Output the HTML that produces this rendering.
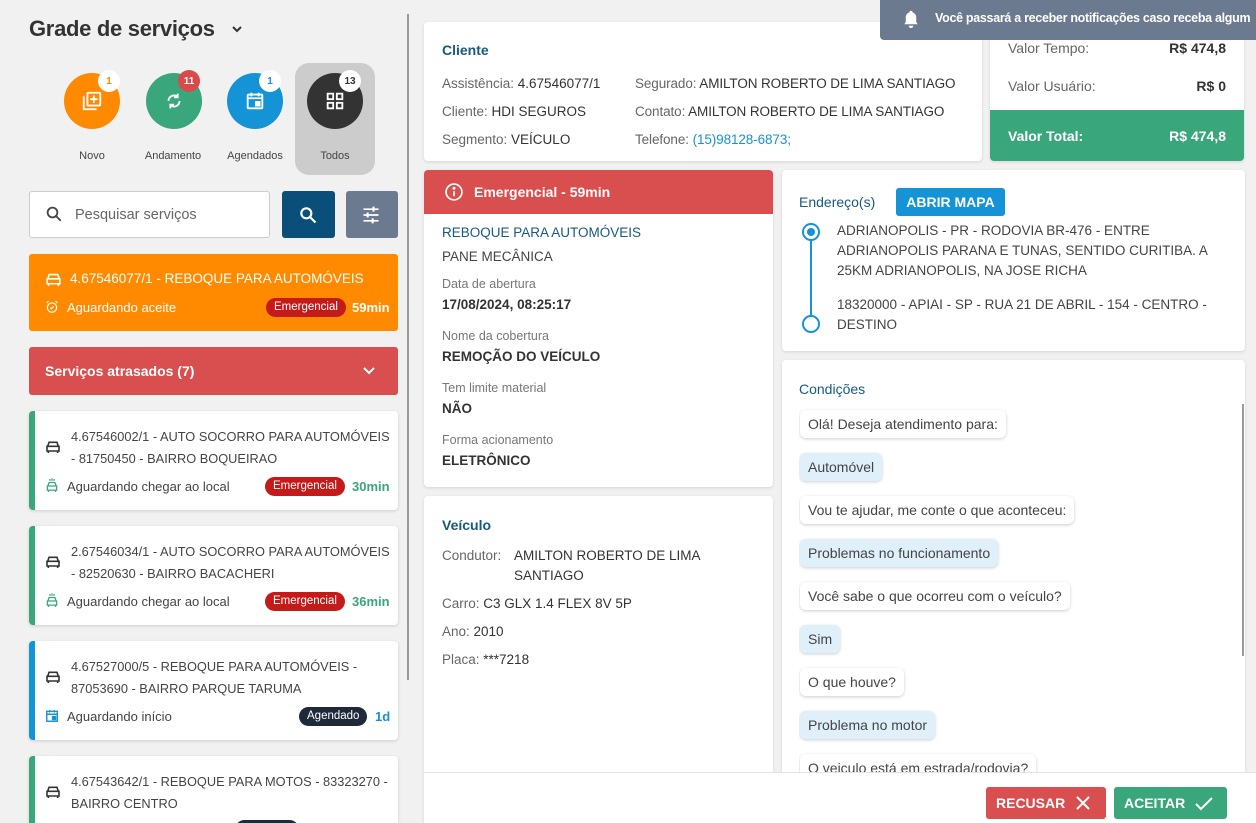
<!DOCTYPE html>
<html style="overflow:hidden"><head><meta charset="utf-8"><style>
*{box-sizing:border-box;margin:0;padding:0}
html,body{width:1256px;height:823px;overflow:hidden}
body{background:#f1f1f1;font-family:"Liberation Sans",sans-serif;color:#333;position:relative;font-size:13px}
.abs{position:absolute}
.card{position:absolute;background:#fff;border-radius:4px;box-shadow:0 1px 3px rgba(0,0,0,.12)}
.title{color:#175a80;font-size:14px;font-weight:bold}
.lbl{color:#666}
.circ{position:absolute;width:56px;height:56px;border-radius:50%;display:flex;align-items:center;justify-content:center}
.badge{position:absolute;width:22px;height:22px;border-radius:50%;background:#fff;font-size:10px;font-weight:bold;display:flex;align-items:center;justify-content:center}
.clab{position:absolute;font-size:11px;color:#444;text-align:center;width:80px}
.svc{position:absolute;left:29px;width:369px;background:#fff;border-radius:4px;box-shadow:0 1px 3px rgba(0,0,0,.15);border-left:6px solid #3aa67b;overflow:hidden}
.svc .t{position:absolute;left:36px;top:15px;font-size:12.8px;line-height:22px;color:#444;width:326px}
.svc .s{position:absolute;left:32px;top:68px;font-size:13px;color:#444}
.pill{position:absolute;border-radius:10px;color:#fff;font-size:11.5px;padding:0 8px;height:19px;line-height:19px}
.tm{position:absolute;font-size:13px;font-weight:bold}
.bub{display:block;width:fit-content;height:28px;line-height:28px;border-radius:6px;padding:0 8px;font-size:14px;color:#444;background:#fff;box-shadow:0 1px 3px rgba(0,0,0,.2);margin-bottom:15px}
.bub.a{background:#dff0fb}
</style></head><body>

<!-- LEFT -->
<div class="abs" style="left:29px;top:16px;font-size:22px;color:#333;font-weight:bold;letter-spacing:-.3px">Grade de serviços</div>
<svg class="abs" style="left:230px;top:24px" width="14" height="12" viewBox="0 0 14 12"><path d="M3 3l4 4 4-4" stroke="#333" stroke-width="2" fill="none"/></svg>
<div class="abs" style="left:407px;top:14px;width:2px;height:666px;background:#999"></div>

<div class="abs" style="left:295px;top:63px;width:80px;height:112px;background:#ccc;border-radius:14px"></div>
<div class="circ" style="left:64px;top:73px;background:#ff8a00"><svg width="22" height="22" viewBox="0 0 24 24" fill="none" stroke="#fff" stroke-width="2"><rect x="7" y="3" width="14" height="14" rx="1"/><path d="M3 7v14h14M14 6v8M10 10h8"/></svg></div>
<div class="badge" style="left:98px;top:70px;color:#ff8a00">1</div>
<div class="circ" style="left:146px;top:73px;background:#3aa67b"><svg width="22" height="22" viewBox="0 0 24 24" fill="none" stroke="#fff" stroke-width="2"><path d="M6 12a6 6 0 0 1 10-4.5M18 12a6 6 0 0 1-10 4.5"/><path d="M16 4v4h-4M8 20v-4h4"/></svg></div>
<div class="badge" style="left:178px;top:70px;background:#d94a4a;color:#fff">11</div>
<div class="circ" style="left:227px;top:73px;background:#1493d6"><svg width="22" height="22" viewBox="0 0 24 24" fill="none" stroke="#fff" stroke-width="2"><rect x="4" y="5" width="16" height="15" rx="1"/><path d="M4 9h16M8 3v4M16 3v4"/><rect x="13" y="13" width="4" height="4" fill="#fff"/></svg></div>
<div class="badge" style="left:259px;top:70px;color:#1493d6">1</div>
<div class="circ" style="left:307px;top:73px;background:#333"><svg width="22" height="22" viewBox="0 0 24 24" fill="none" stroke="#fff" stroke-width="2"><rect x="4" y="4" width="6" height="6"/><rect x="14" y="4" width="6" height="6"/><rect x="4" y="14" width="6" height="6"/><rect x="14" y="14" width="6" height="6"/></svg></div>
<div class="badge" style="left:339px;top:70px;color:#333">13</div>
<div class="clab" style="left:52px;top:150px">Novo</div>
<div class="clab" style="left:133px;top:150px">Andamento</div>
<div class="clab" style="left:215px;top:150px">Agendados</div>
<div class="clab" style="left:295px;top:150px">Todos</div>

<div class="abs" style="left:29px;top:191px;width:241px;height:47px;background:#fff;border:1px solid #ccc;border-radius:3px"></div>
<svg class="abs" style="left:45px;top:205px" width="18" height="18" viewBox="0 0 24 24" fill="none" stroke="#444" stroke-width="2.4"><circle cx="10" cy="10" r="6.5"/><path d="M15 15l6 6"/></svg>
<div class="abs" style="left:75px;top:207px;font-size:14.5px;color:#666">Pesquisar serviços</div>
<div class="abs" style="left:282px;top:191px;width:53px;height:47px;background:#0a4f7a;border-radius:3px"></div>
<svg class="abs" style="left:298px;top:205px" width="20" height="20" viewBox="0 0 24 24" fill="none" stroke="#fff" stroke-width="2.6"><circle cx="10" cy="10" r="6"/><path d="M15 15l6 6"/></svg>
<div class="abs" style="left:346px;top:191px;width:52px;height:47px;background:#6b7a8f;border-radius:3px"></div>
<svg class="abs" style="left:361px;top:205px" width="20" height="20" viewBox="0 0 24 24" fill="none" stroke="#fff" stroke-width="2"><path d="M3 5h18M3 12h18M3 19h18"/><path d="M15 2v6M8 9v6M14 16v6" stroke-width="2.5"/></svg>

<div class="abs" style="left:29px;top:254px;width:369px;height:77px;background:#ff8a00;border-radius:3px;color:#fff"></div>
<svg class="abs" style="left:45px;top:272px" width="17" height="15" viewBox="0 0 24 20" fill="none" stroke="#fff" stroke-width="2.2"><path d="M4 9l2-6h12l2 6M3 9h18v7H3zM5 16v3M19 16v3"/></svg>
<div class="abs" style="left:70px;top:271px;font-size:13.5px;color:#fff">4.67546077/1 - REBOQUE PARA AUTOMÓVEIS</div>
<svg class="abs" style="left:45px;top:300px" width="14" height="14" viewBox="0 0 24 24" fill="none" stroke="#fff" stroke-width="2"><circle cx="12" cy="13" r="8"/><path d="M9 13l2 2 4-4M3 5l3-3M21 5l-3-3"/></svg>
<div class="abs" style="left:67px;top:300px;font-size:13px;color:#fff">Aguardando aceite</div>
<div class="pill" style="left:266px;top:298px;background:#c41a1a">Emergencial</div>
<div class="tm" style="left:352px;top:300px;color:#fff">59min</div>

<div class="abs" style="left:29px;top:347px;width:369px;height:48px;background:#d94f4f;border-radius:3px"></div>
<div class="abs" style="left:45px;top:363px;font-size:14px;color:#fff;font-weight:bold">Serviços atrasados (7)</div>
<svg class="abs" style="left:362px;top:365px" width="14" height="12" viewBox="0 0 14 12"><path d="M2 3l5 5 5-5" stroke="#fff" stroke-width="2" fill="none"/></svg>

<div class="svc" style="top:411px;height:99px"><div class="t">4.67546002/1 - AUTO SOCORRO PARA AUTOMÓVEIS - 81750450 - BAIRRO BOQUEIRAO</div><div class="s">Aguardando chegar ao local</div>
<div class="pill" style="left:230px;top:66px;background:#c41a1a">Emergencial</div><div class="tm" style="left:317px;top:68px;color:#3aa67b">30min</div></div>
<div class="svc" style="top:526px;height:99px"><div class="t">2.67546034/1 - AUTO SOCORRO PARA AUTOMÓVEIS - 82520630 - BAIRRO BACACHERI</div><div class="s">Aguardando chegar ao local</div>
<div class="pill" style="left:230px;top:66px;background:#c41a1a">Emergencial</div><div class="tm" style="left:317px;top:68px;color:#3aa67b">36min</div></div>
<div class="svc" style="top:641px;height:99px;border-left-color:#1493d6"><div class="t">4.67527000/5 - REBOQUE PARA AUTOMÓVEIS - 87053690 - BAIRRO PARQUE TARUMA</div><div class="s">Aguardando início</div>
<div class="pill" style="left:264px;top:66px;background:#1e2a3a">Agendado</div><div class="tm" style="left:340px;top:68px;color:#1493d6">1d</div></div>
<div class="svc" style="top:756px;height:67px;border-radius:4px 4px 0 0"><div class="t">4.67543642/1 - REBOQUE PARA MOTOS - 83323270 - BAIRRO CENTRO</div>
<div class="pill" style="left:200px;top:64px;background:#1e2a3a;width:64px"></div></div>
<svg class="abs" style="left:45px;top:440px" width="16" height="14" viewBox="0 0 24 20" fill="none" stroke="#333" stroke-width="2.4"><path d="M4 9l2-6h12l2 6M3 9h18v7H3zM5 16v3M19 16v3"/></svg>
<svg class="abs" style="left:45px;top:555px" width="16" height="14" viewBox="0 0 24 20" fill="none" stroke="#333" stroke-width="2.4"><path d="M4 9l2-6h12l2 6M3 9h18v7H3zM5 16v3M19 16v3"/></svg>
<svg class="abs" style="left:45px;top:670px" width="16" height="14" viewBox="0 0 24 20" fill="none" stroke="#333" stroke-width="2.4"><path d="M4 9l2-6h12l2 6M3 9h18v7H3zM5 16v3M19 16v3"/></svg>
<svg class="abs" style="left:45px;top:785px" width="16" height="14" viewBox="0 0 24 20" fill="none" stroke="#333" stroke-width="2.4"><path d="M4 9l2-6h12l2 6M3 9h18v7H3zM5 16v3M19 16v3"/></svg>
<svg class="abs" style="left:45px;top:478px" width="14" height="16" viewBox="0 0 24 26" fill="none" stroke="#3aa67b" stroke-width="2.2"><path d="M8 1l1 3M12 0v4M16 1l-1 3M5 13l2-6h10l2 6M4 13h16v7H4zM6 20v3M18 20v3"/></svg>
<svg class="abs" style="left:45px;top:593px" width="14" height="16" viewBox="0 0 24 26" fill="none" stroke="#3aa67b" stroke-width="2.2"><path d="M8 1l1 3M12 0v4M16 1l-1 3M5 13l2-6h10l2 6M4 13h16v7H4zM6 20v3M18 20v3"/></svg>
<svg class="abs" style="left:45px;top:709px" width="14" height="14" viewBox="0 0 24 24" fill="none" stroke="#1493d6" stroke-width="2.4"><rect x="3" y="4" width="18" height="17"/><path d="M3 9h18M8 2v4M16 2v4"/><rect x="13" y="13" width="5" height="5" fill="#1493d6"/></svg>

<!-- CLIENT -->
<div class="card" style="left:424px;top:22px;width:558px;height:139px"></div>
<div class="abs title" style="left:442px;top:42px">Cliente</div>
<div class="abs" style="left:442px;top:70px;line-height:28px;font-size:13.5px"><span class="lbl">Assistência:</span> 4.67546077/1<br><span class="lbl">Cliente:</span> HDI SEGUROS<br><span class="lbl">Segmento:</span> VEÍCULO</div>
<div class="abs" style="left:635px;top:70px;line-height:28px;font-size:13.5px;white-space:nowrap;letter-spacing:-.1px"><span class="lbl">Segurado:</span> AMILTON ROBERTO DE LIMA SANTIAGO<br><span class="lbl">Contato:</span> AMILTON ROBERTO DE LIMA SANTIAGO<br><span class="lbl">Telefone:</span> <span style="color:#1493d6">(15)98128-6873;</span></div>

<!-- VALUES -->
<div class="card" style="left:990px;top:22px;width:254px;height:139px;overflow:hidden">
<div class="abs" style="left:18px;top:18px;font-size:14px;color:#666">Valor Tempo:</div><div class="abs" style="right:18px;top:18px;font-size:14px;font-weight:bold;color:#333">R$ 474,8</div>
<div class="abs" style="left:18px;top:56px;font-size:14px;color:#666">Valor Usuário:</div><div class="abs" style="right:18px;top:56px;font-size:14px;font-weight:bold;color:#333">R$ 0</div>
<div class="abs" style="left:0;top:88px;width:254px;height:51px;background:#3aa67b"></div>
<div class="abs" style="left:18px;top:106px;font-size:14px;color:#fff;font-weight:bold">Valor Total:</div><div class="abs" style="right:18px;top:106px;font-size:14px;font-weight:bold;color:#fff">R$ 474,8</div>
</div>

<!-- EMERGENCIAL -->
<div class="card" style="left:424px;top:170px;width:349px;height:317px;overflow:hidden">
<div style="height:44px;background:#d94f4f"></div></div>
<svg class="abs" style="left:444px;top:182px" width="20" height="20" viewBox="0 0 24 24" fill="none" stroke="#fff" stroke-width="2"><circle cx="12" cy="12" r="9.5"/><path d="M12 11v6"/><circle cx="12" cy="7.5" r="0.8" fill="#fff"/></svg>
<div class="abs" style="left:474px;top:184px;color:#fff;font-weight:bold;font-size:14px">Emergencial - 59min</div>
<div class="abs title" style="left:442px;top:225px;font-size:13.5px;font-weight:normal">REBOQUE PARA AUTOMÓVEIS</div>
<div class="abs" style="left:442px;top:249px;font-size:13.5px;color:#444">PANE MECÂNICA</div>
<div class="abs" style="left:442px;top:277px;font-size:12.5px;color:#777">Data de abertura</div>
<div class="abs" style="left:442px;top:297px;font-size:13.5px;font-weight:bold;color:#333">17/08/2024, 08:25:17</div>
<div class="abs" style="left:442px;top:329px;font-size:12.5px;color:#777">Nome da cobertura</div>
<div class="abs" style="left:442px;top:349px;font-size:13.5px;font-weight:bold;color:#333">REMOÇÃO DO VEÍCULO</div>
<div class="abs" style="left:442px;top:381px;font-size:12.5px;color:#777">Tem limite material</div>
<div class="abs" style="left:442px;top:401px;font-size:13.5px;font-weight:bold;color:#333">NÃO</div>
<div class="abs" style="left:442px;top:433px;font-size:12.5px;color:#777">Forma acionamento</div>
<div class="abs" style="left:442px;top:453px;font-size:13.5px;font-weight:bold;color:#333">ELETRÔNICO</div>

<!-- VEICULO -->
<div class="card" style="left:424px;top:496px;width:349px;height:327px;border-radius:4px 4px 0 0"></div>
<div class="abs title" style="left:442px;top:517px">Veículo</div>
<div class="abs" style="left:442px;top:546px;font-size:13.5px;line-height:20px;color:#666">Condutor:</div>
<div class="abs" style="left:514px;top:546px;font-size:13.5px;line-height:20px;color:#333;width:220px">AMILTON ROBERTO DE LIMA SANTIAGO</div>
<div class="abs" style="left:442px;top:590px;font-size:13.5px;line-height:28px"><span class="lbl">Carro:</span> C3 GLX 1.4 FLEX 8V 5P<br><span class="lbl">Ano:</span> 2010<br><span class="lbl">Placa:</span> ***7218</div>

<!-- ENDERECO -->
<div class="card" style="left:782px;top:170px;width:463px;height:181px"></div>
<div class="abs title" style="left:799px;top:194px;font-weight:normal">Endereço(s)</div>
<div class="abs" style="left:896px;top:188px;width:109px;height:28px;background:#1493d6;border-radius:3px;color:#fff;font-weight:bold;font-size:14px;text-align:center;line-height:28px">ABRIR MAPA</div>
<div class="abs" style="left:810px;top:232px;width:2px;height:90px;background:#1493d6"></div>
<div class="abs" style="left:802px;top:223px;width:18px;height:18px;border-radius:50%;border:2px solid #1493d6;background:#fff"><div style="margin:3px;width:8px;height:8px;border-radius:50%;background:#1493d6"></div></div>
<div class="abs" style="left:802px;top:315px;width:18px;height:18px;border-radius:50%;border:2px solid #1493d6;background:#fff"></div>
<div class="abs" style="left:837px;top:221px;width:390px;font-size:13.5px;line-height:20px;color:#444">ADRIANOPOLIS - PR - RODOVIA BR-476 - ENTRE ADRIANOPOLIS PARANA E TUNAS, SENTIDO CURITIBA. A 25KM ADRIANOPOLIS, NA JOSE RICHA</div>
<div class="abs" style="left:837px;top:295px;width:390px;font-size:13.5px;line-height:20px;color:#444">18320000 - APIAI - SP - RUA 21 DE ABRIL - 154 - CENTRO - DESTINO</div>

<!-- CONDICOES -->
<div class="card" style="left:782px;top:360px;width:463px;height:463px;border-radius:4px 4px 0 0"></div>
<div class="abs title" style="left:799px;top:381px;font-weight:normal">Condições</div>
<div class="abs" style="left:1242px;top:404px;width:2px;height:252px;background:#999"></div>
<div class="abs" style="left:799px;top:408px;width:430px;height:364px;overflow:hidden;padding-left:1px;padding-top:2px">
<div class="bub">Olá! Deseja atendimento para:</div>
<div class="bub a">Automóvel</div>
<div class="bub">Vou te ajudar, me conte o que aconteceu:</div>
<div class="bub a">Problemas no funcionamento</div>
<div class="bub">Você sabe o que ocorreu com o veículo?</div>
<div class="bub a">Sim</div>
<div class="bub">O que houve?</div>
<div class="bub a">Problema no motor</div>
<div class="bub">O veiculo está em estrada/rodovia?</div>
</div>

<!-- FOOTER -->
<div class="abs" style="left:424px;top:772px;width:832px;height:51px;background:#fff;border-top:1px solid #e4e4e4"></div>
<div class="abs" style="left:986px;top:787px;width:120px;height:32px;background:#d94f4f;border-radius:3px;color:#fff;font-weight:bold;font-size:14px;line-height:32px;padding-left:10px">RECUSAR</div>
<svg class="abs" style="left:1075px;top:795px" width="16" height="16" viewBox="0 0 16 16"><path d="M2 2l12 12M14 2L2 14" stroke="#fff" stroke-width="2"/></svg>
<div class="abs" style="left:1114px;top:787px;width:113px;height:32px;background:#3aa67b;border-radius:3px;color:#fff;font-weight:bold;font-size:14px;line-height:32px;padding-left:10px">ACEITAR</div>
<svg class="abs" style="left:1194px;top:795px" width="20" height="16" viewBox="0 0 20 16"><path d="M2 9l5 5L18 3" stroke="#fff" stroke-width="2" fill="none"/></svg>

<!-- NOTIFICATION -->
<div class="abs" style="left:880px;top:0;width:376px;height:40px;background:#6b7a8f;border-radius:0 0 0 4px"></div>
<svg class="abs" style="left:902px;top:9px" width="18" height="20" viewBox="0 0 24 26" fill="#fff"><path d="M12 2a2 2 0 0 1 2 2 7 7 0 0 1 5 7v6l2 3H3l2-3v-6a7 7 0 0 1 5-7 2 2 0 0 1 2-2z"/><path d="M9 22h6a3 3 0 0 1-6 0z"/></svg>
<div class="abs" style="left:935px;top:11px;font-size:12.5px;color:#fff;font-weight:bold;white-space:nowrap;letter-spacing:-.3px">Você passará a receber notificações caso receba algum</div>
</body></html>
